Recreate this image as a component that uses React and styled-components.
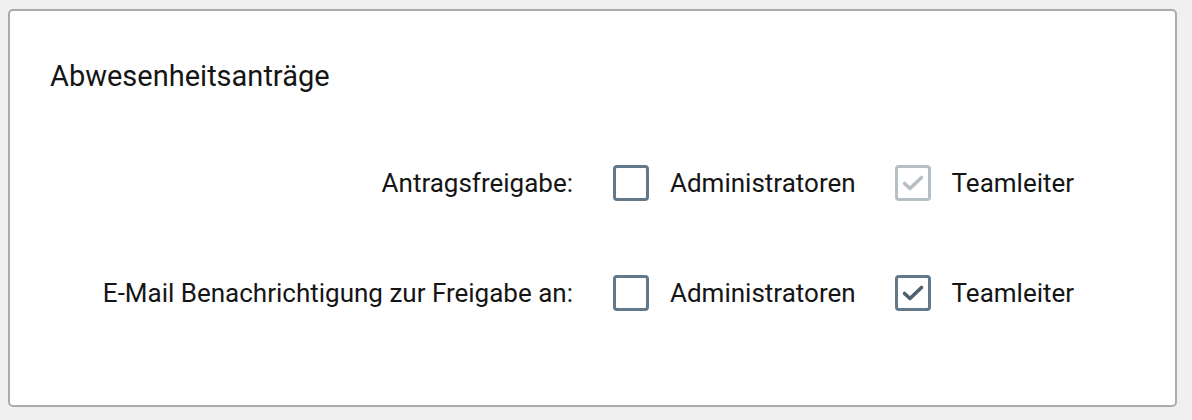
import React from "react";
import styled, { createGlobalStyle } from "styled-components";

const Global = createGlobalStyle`
  html, body { margin: 0; padding: 0; background: #f0f0f0; }
  body { font-family: Roboto, "Liberation Sans", Arial, sans-serif; color: #151515; }
`;

const Page = styled.div`
  padding: 9px 15px 13px 8px;
`;

const Card = styled.section`
  box-sizing: border-box;
  height: 398px;
  background: #fff;
  border: 2px solid #ababab;
  border-radius: 5px;
  padding: 48px 0 0 40px;
  display: flex;
  flex-direction: column;
`;

const Title = styled.h2`
  margin: 0;
  font-size: 29px;
  line-height: 34px;
  font-weight: 400;
`;

const Form = styled.div`
  margin-top: 72px;
  display: grid;
  grid-template-columns: 523px auto;
  column-gap: 40px;
  row-gap: 74px;
  align-items: center;
`;

const Label = styled.div`
  font-size: 26px;
  line-height: 36px;
  text-align: right;
`;

const Options = styled.div`
  display: flex;
  align-items: center;
  gap: 39px;
`;

const Option = styled.label`
  display: flex;
  align-items: center;
  gap: 21px;
  font-size: 26px;
  line-height: 36px;
`;

const Box = styled.span`
  box-sizing: border-box;
  width: 36px;
  height: 36px;
  border: 3px solid ${(p) => (p.$disabled ? "#b5bfc6" : "#63798a")};
  border-radius: 4px;
  display: flex;
  align-items: center;
  justify-content: center;
  background: #fff;
`;

const Check = ({ color }) => (
  <svg width="24" height="24" viewBox="0 0 24 24">
    <path d="M3.5 12.5 L9 17.5 L20.5 6.5" fill="none" stroke={color} strokeWidth="3.6" strokeLinecap="round" strokeLinejoin="round" />
  </svg>
);

const Checkbox = ({ checked, disabled, label }) => (
  <Option>
    <Box $disabled={disabled}>
      {checked && <Check color={disabled ? "#b5bfc6" : "#4f5f6c"} />}
    </Box>
    {label}
  </Option>
);

export default function App() {
  return (
    <>
      <Global />
      <Page>
        <Card>
          <Title>Abwesenheitsanträge</Title>
          <Form>
            <Label>Antragsfreigabe:</Label>
            <Options>
              <Checkbox label="Administratoren" />
              <Checkbox label="Teamleiter" checked disabled />
            </Options>
            <Label>E-Mail Benachrichtigung zur Freigabe an:</Label>
            <Options>
              <Checkbox label="Administratoren" />
              <Checkbox label="Teamleiter" checked />
            </Options>
          </Form>
        </Card>
      </Page>
    </>
  );
}
